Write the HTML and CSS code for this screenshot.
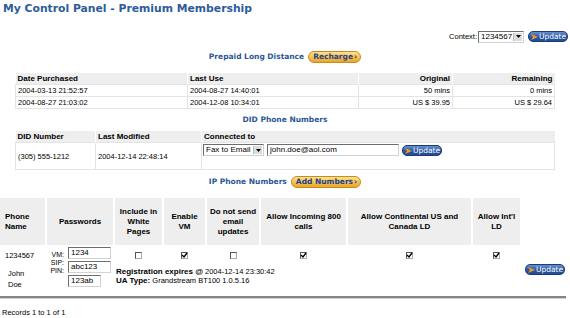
FILE: index.html
```html
<!DOCTYPE html>
<html>
<head>
<meta charset="utf-8">
<title>My Control Panel</title>
<link rel="stylesheet" href="styles.css">
</head>
<body>
<h1 class="title">My Control Panel - Premium Membership</h1>

<div class="context-row">
  <span class="ctx-label">Context:</span>
  <span class="fsel sel-ctx"><span class="fsel-text">1234567</span><span class="fsel-arrow"><svg width="5" height="3" viewBox="0 0 5 3"><polygon points="0,0 5,0 2.5,3" fill="#000"/></svg></span></span>
  <span class="btn-blue"><svg class="arr" width="7" height="6" viewBox="0 0 7 6"><polygon points="0,0 7,3 0,6 2,3" fill="#f29a1f"/></svg>Update</span>
</div>

<div class="section-head">
  <span class="sh-text">Prepaid Long Distance</span>
  <span class="btn-yellow">Recharge<span class="chev">›</span></span>
</div>

<table class="t1">
  <colgroup><col class="c1a"><col class="c1b"><col class="c1c"><col></colgroup>
  <tr><th>Date Purchased</th><th>Last Use</th><th class="r">Original</th><th class="r">Remaining</th></tr>
  <tr><td>2004-03-13 21:52:57</td><td>2004-08-27 14:40:01</td><td class="r">50 mins</td><td class="r">0 mins</td></tr>
  <tr><td>2004-08-27 21:03:02</td><td>2004-12-08 10:34:01</td><td class="r">US $ 39.95</td><td class="r">US $ 29.64</td></tr>
</table>

<div class="section-head sh-did">
  <span class="sh-text">DID Phone Numbers</span>
</div>

<table class="t2">
  <colgroup><col class="c2a"><col class="c2b"><col></colgroup>
  <tr><th>DID Number</th><th>Last Modified</th><th>Connected to</th></tr>
  <tr>
    <td class="mid">(305) 555-1212</td>
    <td class="mid">2004-12-14 22:48:14</td>
    <td class="conn">
      <div class="conn-row">
        <span class="fsel sel-fax"><span class="fsel-text">Fax to Email</span><span class="fsel-arrow"><svg width="5" height="3" viewBox="0 0 5 3"><polygon points="0,0 5,0 2.5,3" fill="#000"/></svg></span></span>
        <span class="finput in-email">john.doe@aol.com</span>
        <span class="btn-blue"><svg class="arr" width="7" height="6" viewBox="0 0 7 6"><polygon points="0,0 7,3 0,6 2,3" fill="#f29a1f"/></svg>Update</span>
      </div>
    </td>
  </tr>
</table>

<div class="section-head sh-ip">
  <span class="sh-text">IP Phone Numbers</span>
  <span class="btn-yellow">Add Numbers<span class="chev">›</span></span>
</div>

<table class="t3">
  <colgroup>
    <col class="k1"><col class="k2"><col class="k3"><col class="k4"><col class="k5"><col class="k6"><col class="k7"><col class="k8"><col>
  </colgroup>
  <tr>
    <th class="l">Phone Name</th>
    <th>Passwords</th>
    <th>Include in White Pages</th>
    <th>Enable VM</th>
    <th>Do not send email updates</th>
    <th>Allow Incoming 800 calls</th>
    <th>Allow Continental US and Canada LD</th>
    <th>Allow Int'l LD</th>
    <th class="blank"></th>
  </tr>
  <tr>
    <td class="phone" rowspan="2">
      <div class="pnum">1234567</div>
      <div class="pname">John<br>Doe</div>
    </td>
    <td class="pw" rowspan="2">
      <div class="pw-grid">
        <div class="pw-labels"><span>VM:</span><span>SIP:</span><span>PIN:</span></div>
        <div class="pw-inputs">
          <span class="finput in-pw">1234</span>
          <span class="finput in-pw">abc123</span>
          <span class="finput in-pw short">123ab</span>
        </div>
      </div>
    </td>
    <td class="cbc"><span class="cb"></span></td>
    <td class="cbc"><span class="cb"><svg width="7" height="7" viewBox="0 0 7 7"><polyline points="1,3 3,5 6,1" fill="none" stroke="#000" stroke-width="1.4"/></svg></span></td>
    <td class="cbc"><span class="cb"></span></td>
    <td class="cbc"><span class="cb"><svg width="7" height="7" viewBox="0 0 7 7"><polyline points="1,3 3,5 6,1" fill="none" stroke="#000" stroke-width="1.4"/></svg></span></td>
    <td class="cbc"><span class="cb"><svg width="7" height="7" viewBox="0 0 7 7"><polyline points="1,3 3,5 6,1" fill="none" stroke="#000" stroke-width="1.4"/></svg></span></td>
    <td class="cbc"><span class="cb"><svg width="7" height="7" viewBox="0 0 7 7"><polyline points="1,3 3,5 6,1" fill="none" stroke="#000" stroke-width="1.4"/></svg></span></td>
    <td></td>
  </tr>
  <tr>
    <td class="reg" colspan="6">
      <div><b>Registration expires @</b> 2004-12-14 23:30:42</div>
      <div><b>UA Type:</b> Grandstream BT100 1.0.5.16</div>
    </td>
    <td class="upd"><span class="btn-blue"><svg class="arr" width="7" height="6" viewBox="0 0 7 6"><polygon points="0,0 7,3 0,6 2,3" fill="#f29a1f"/></svg>Update</span></td>
  </tr>
</table>

<hr class="rule">

<div class="records">Records 1 to 1 of 1</div>
</body>
</html>
```

FILE: styles.css
```css
* { box-sizing: border-box; }

body {
  margin: 0;
  width: 570px;
  overflow: hidden;
  background: #fff;
  color: #000;
  font-family: "Liberation Sans", Arial, sans-serif;
  font-size: 7.5px;
  line-height: 9px;
}

.title {
  margin: 0;
  padding: 2px 0 0 3px;
  font: bold 10.8px/14px "DejaVu Sans", Verdana, sans-serif;
  color: #2d5c9b;
}

/* context row */
.context-row {
  display: flex;
  justify-content: flex-end;
  align-items: center;
  gap: 4px;
  margin-top: 14px;
  padding-right: 2px;
  height: 13px;
}
.ctx-label { margin-right: -3px; }

/* fake select */
.fsel {
  display: inline-flex;
  align-items: stretch;
  height: 12px;
  background: #fff;
  border: 1px solid;
  border-color: #6e6e6e #d0d0d0 #d0d0d0 #6e6e6e;
  font-size: 8px;
  line-height: 10px;
}
.fsel-text { flex: 1; padding-left: 2px; white-space: nowrap; overflow: hidden; }
.fsel-arrow {
  width: 9px;
  display: flex;
  align-items: center;
  justify-content: center;
  background: #dcdcdc;
  border-left: 1px solid #bbb;
  margin: 1px;
}
.sel-ctx { width: 46px; }
.sel-fax { width: 61px; }

/* fake input */
.finput {
  display: inline-block;
  height: 12px;
  background: #fff;
  border: 1px solid;
  border-color: #6e6e6e #d2d2d2 #d2d2d2 #6e6e6e;
  font-size: 8px;
  line-height: 10px;
  padding-left: 2px;
  white-space: nowrap;
}
.in-email { width: 132px; }

/* buttons */
.btn-blue {
  display: inline-flex;
  align-items: center;
  gap: 1px;
  width: 40px;
  height: 11px;
  padding: 0 2px;
  border-radius: 5px;
  border: 1px solid #1d3c74;
  background: linear-gradient(#6690cf, #2a579f 55%, #224c92);
  color: #fff;
  font: 7.5px/9px "DejaVu Sans", Verdana, sans-serif;
  white-space: nowrap;
}
.btn-blue .arr { flex: none; }

.btn-yellow {
  display: inline-flex;
  align-items: center;
  height: 12px;
  padding: 0 3px 0 4px;
  border-radius: 6px;
  border: 1px solid #c98b1c;
  background: linear-gradient(#fde38f, #f4bd48 60%, #e9a62c);
  color: #1f3f91;
  font: bold 7.5px/10px "DejaVu Sans", Verdana, sans-serif;
  white-space: nowrap;
}
.chev { margin-left: 1px; font-weight: bold; }

/* section heads */
.section-head {
  display: flex;
  justify-content: center;
  align-items: center;
  gap: 4px;
  margin-top: 8px;
  height: 12px;
}
.sh-text {
  font: bold 7.5px/10px "DejaVu Sans", Verdana, sans-serif;
  color: #2b5797;
}
.sh-did { margin-top: 6px; height: 10px; }
.sh-ip { margin-top: 5px; height: 13px; }

/* table 1 / 2 */
.t1, .t2 {
  width: 540px;
  margin: 9px auto 0;
  border-collapse: collapse;
  table-layout: fixed;
}
.t1 { margin-top: 10px; }
.t2 { margin-top: 6px; }
.c1a { width: 172px; }
.c1b { width: 171px; }
.c1c { width: 94px; }
.c2a { width: 80px; }
.c2b { width: 106px; }

.t1 th, .t2 th {
  background: #eeeeee;
  font-weight: bold;
  font-size: 8px;
  text-align: left;
  padding: 0 2px;
  border-left: 1px solid #fff;
  white-space: nowrap;
}
.t1 th { height: 11px; }
.t2 th { height: 12px; }
.t1 th:first-child, .t2 th:first-child { border-left: 0; }
.t1 td, .t2 td {
  border: 1px solid #e4e4e4;
  padding: 0 2px;
  white-space: nowrap;
}
.t1 td { height: 12px; }
.t1 .r { text-align: right; }

.t2 td { height: 27px; }
.t2 td.mid { vertical-align: middle; }
.t2 td.conn { vertical-align: top; padding: 1px 0 0 1px; }
.conn-row { display: flex; align-items: flex-start; gap: 3px; }
.conn-row .btn-blue { margin-top: 1px; }

/* table 3 */
.t3 {
  width: 572px;
  margin: 10px 0 0 -2px;
  border-collapse: separate;
  border-spacing: 2px 0;
  table-layout: fixed;
}
.k1 { width: 45px; }
.k2 { width: 66px; }
.k3 { width: 47px; }
.k4 { width: 41px; }
.k5 { width: 52px; }
.k6 { width: 85px; }
.k7 { width: 123px; }
.k8 { width: 47px; }

.t3 th {
  background: #eeeeee;
  font-size: 8px;
  line-height: 10px;
  font-weight: bold;
  text-align: center;
  vertical-align: middle;
  height: 47px;
  padding: 0 1px;
}
.t3 th.l { text-align: left; padding-left: 5px; }
.t3 th.blank { background: transparent; }

.t3 td { padding: 0; vertical-align: top; }

.phone { padding-left: 5px !important; }
.pnum { margin-top: 6px; }
.pname { margin-top: 8px; padding-left: 3px; line-height: 11px; }

.pw-grid { display: flex; gap: 4px; padding-top: 2px; }
.pw-labels {
  width: 17px;
  display: flex;
  flex-direction: column;
  align-items: flex-end;
  padding-top: 4px;
  font-size: 7px;
  line-height: 8px;
}
.pw-inputs { display: flex; flex-direction: column; gap: 2px; }
.in-pw { width: 43px; height: 12px; }
.in-pw.short { width: 33px; }

.cbc { text-align: center; height: 17px; padding-top: 7px !important; }
.cb {
  display: inline-block;
  width: 7px;
  height: 7px;
  border: 1px solid;
  border-color: #555 #aaa #aaa #555;
  background: #fff;
  position: relative;
  vertical-align: top;
}
.cb svg { position: absolute; left: -1px; top: -1px; }

.reg {
  padding: 5px 0 0 1px !important;
  font-size: 7.5px;
  line-height: 9px;
  height: 28px;
  white-space: nowrap;
}
.reg b { font-size: 8px; }
.upd { text-align: center; padding-top: 2px !important; }

.rule {
  margin: 6px 4px 0 0;
  border: 0;
  border-top: 2px solid #858585;
  border-bottom: 1px solid #d2d2d2;
  height: 0;
}

.records {
  margin-top: 9px;
  padding-left: 2px;
  font-size: 7.5px;
}
```
